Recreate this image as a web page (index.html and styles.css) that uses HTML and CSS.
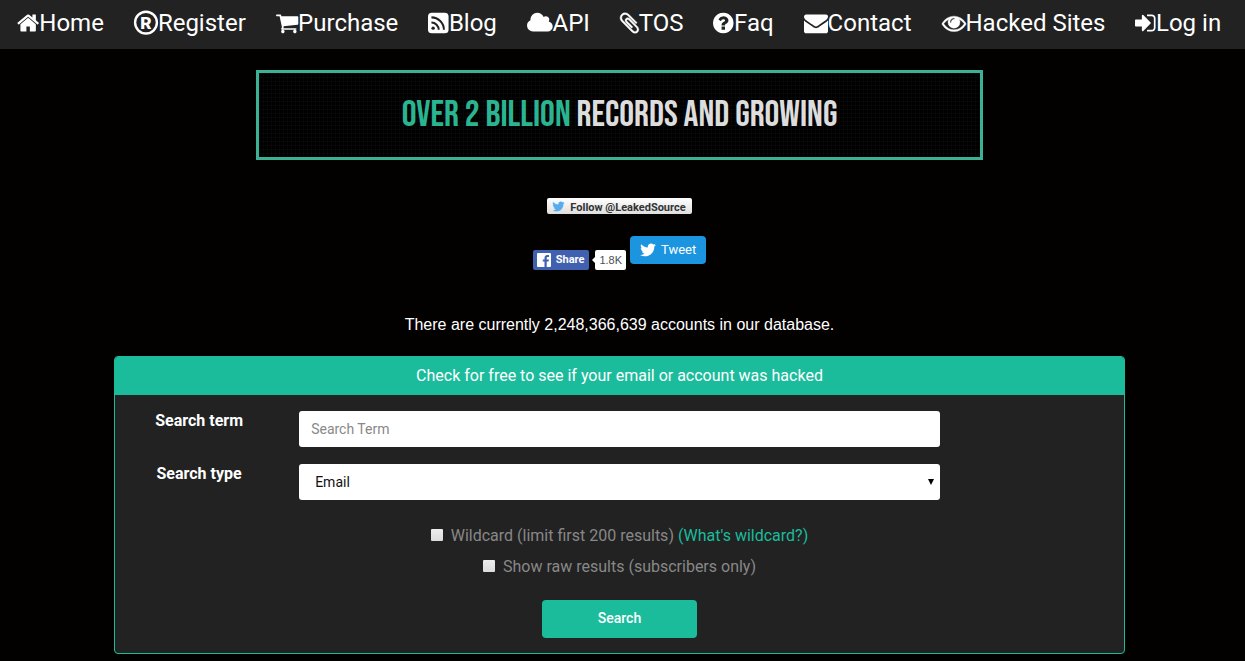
FILE: index.html
```html
<!DOCTYPE html>
<html lang="en">
<head>
<meta charset="utf-8">
<title>LeakedSource</title>
<link rel="stylesheet" href="styles.css">
</head>
<body>
<nav class="navbar">
  <a href="#"><svg class="icon" viewBox="64 0 1664 1792"><path d="M1472 992v480q0 26-19 45t-45 19h-384v-384h-256v384h-384q-26 0-45-19t-19-45v-480q0-1 .5-3t.5-3l575-474 575 474q1 2 1 6zm223-69l-62 74q-8 9-21 11h-3q-13 0-21-7l-692-577-692 577q-12 8-24 7-13-2-21-11l-62-74q-8-10-7-23.5t11-21.5l719-599q32-26 76-26t76 26l244 204v-195q0-14 9-23t23-9h192q14 0 23 9t9 23v408l219 182q10 8 11 21.5t-7 23.5z"/></svg>Home</a>
  <a href="#"><svg class="icon" viewBox="0 0 1792 1792"><circle class="ring" cx="896" cy="866" r="815"/><text class="mark" x="896" y="1340" text-anchor="middle">R</text></svg>Register</a>
  <a href="#"><svg class="icon" viewBox="64 0 1664 1792"><path d="M704 1536q0 52-38 90t-90 38-90-38-38-90 38-90 90-38 90 38 38 90zm896 0q0 52-38 90t-90 38-90-38-38-90 38-90 90-38 90 38 38 90zm128-1088v512q0 24-16.5 42.5t-40.5 21.5l-1044 122q13 60 13 70 0 16-24 64h920q26 0 45 19t19 45-19 45-45 19h-1024q-26 0-45-19t-19-45q0-11 8-31.5t16-36 21.5-40 15.5-29.5l-177-823h-204q-26 0-45-19t-19-45 19-45 45-19h256q16 0 28.5 6.5t19.5 15.5 13 24.5 8 26 5.5 29.5 4.5 26h1201q26 0 45 19t19 45z"/></svg>Purchase</a>
  <a href="#"><svg class="icon" viewBox="128 0 1536 1792"><rect x="128" y="128" width="1536" height="1536" rx="288"/><circle class="cut" cx="512" cy="1280" r="128"/><path class="cut-line" d="M384 864a544 544 0 0 1 544 544M384 476a932 932 0 0 1 932 932"/></svg>Blog</a>
  <a href="#"><svg class="icon" viewBox="64 0 1920 1792"><path d="M1984 1152q0 159-112.500 271.500t-271.500 112.500h-1088q-185 0-316.500-131.500t-131.500-316.500q0-132 71-241.500t187-163.500q-2-28-2-43 0-212 150-362t362-150q158 0 286.500 88t187.500 230q70-62 166-62 106 0 181 75t75 181q0 75-41 138 129 30 213 134.500t84 239.500z"/></svg>API</a>
  <a href="#"><svg class="icon bold" viewBox="192 0 1408 1792"><path d="M1596 1385q0 117-79 196t-196 79q-135 0-235-100l-777-776q-113-115-113-271 0-159 110-270t269-111q158 0 273 113l605 606q10 10 10 22 0 16-30.500 46.500t-46.500 30.500q-13 0-23-10l-606-607q-79-77-181-77-106 0-179 75t-73 181q0 105 76 181l776 777q63 63 145 63 64 0 106-42t42-106q0-82-63-145l-581-581q-26-24-60-24-29 0-48 19t-19 48q0 32 25 59l410 410q10 10 10 22 0 16-31 47t-47 31q-12 0-22-10l-410-410q-63-61-63-149 0-82 57-139t139-57q88 0 149 63l581 581q100 98 100 235z"/></svg>TOS</a>
  <a href="#"><svg class="icon" viewBox="128 0 1536 1792"><path d="M1024 1376v-192q0-14-9-23t-23-9h-192q-14 0-23 9t-9 23v192q0 14 9 23t23 9h192q14 0 23-9t9-23zm256-672q0-88-55.500-163t-138.500-116-170-41q-243 0-371 213-15 24 8 42l132 100q7 6 19 6 16 0 25-12 53-68 86-92 34-24 86-24 48 0 85.500 26t37.500 59q0 38-20 61t-68 45q-63 28-115.500 86.500t-52.500 125.500v36q0 14 9 23t23 9h192q14 0 23-9t9-23q0-19 21.500-49.500t54.500-49.500q32-18 49-28.500t46-35 44.500-48 28-60.500 12.500-81zm384 192q0 209-103 385.500t-279.500 279.500-385.500 103-385.500-103-279.500-279.500-103-385.500 103-385.500 279.500-279.500 385.500-103 385.500 103 279.500 279.500 103 385.500z"/></svg>Faq</a>
  <a href="#"><svg class="icon" viewBox="0 0 1792 1792"><path d="M1792 710v794q0 66-47 113t-113 47h-1472q-66 0-113-47t-47-113v-794q44 49 101 87 362 246 497 345 57 42 92.500 65.500t94.500 48 110 24.500h2q51 0 110-24.500t94.500-48 92.500-65.500q170-123 498-345 57-39 100-87zm0-294q0 79-49 151t-122 123q-376 261-468 325-10 7-42.500 31t-54 38.500-52 32.500-57.500 27-50 9h-2q-23 0-50-9t-57.500-27-52-32.500-54-38.500-42.500-31q-91-64-262-182.500t-205-142.500q-62-42-117-115.500t-55-136.500q0-78 41.500-130t118.500-52h1472q65 0 112.500 47t47.500 113z"/></svg>Contact</a>
  <a href="#"><svg class="icon bold" viewBox="0 0 1792 1792"><path d="M1664 960q-152-236-381-353 61 104 61 225 0 185-131.500 316.500t-316.500 131.500-316.500-131.500-131.500-316.500q0-121 61-225-229 117-381 353 133 205 333.500 326.500t434.500 121.500 434.500-121.500 333.500-326.500zm-720-384q0-20-14-34t-34-14q-125 0-214.500 89.500t-89.500 214.500q0 20 14 34t34 14 34-14 14-34q0-86 61-147t147-61q20 0 34-14t14-34zm848 384q0 34-20 69-140 230-376.500 368.500t-499.500 138.500-499.500-139-376.500-368q-20-35-20-69t20-69q140-229 376.500-368t499.500-139 499.500 139 376.500 368q20 35 20 69z"/></svg>Hacked Sites</a>
  <a href="#"><svg class="icon" viewBox="128 0 1536 1792"><path d="M1312 896q0 26-19 45l-544 544q-19 19-45 19t-45-19-19-45v-288h-448q-26 0-45-19t-19-45v-384q0-26 19-45t45-19h448v-288q0-26 19-45t45-19 45 19l544 544q19 19 19 45zm352-352v704q0 119-84.500 203.500t-203.500 84.500h-320q-13 0-22.500-9.500t-9.500-22.500q0-4-1-20t-.5-26.500 3-23.500 10-19.500 20.500-6.500h320q66 0 113-47t47-113v-704q0-66-47-113t-113-47h-312l-11.500-1-11.500-3-8-5.500-7-9-2-13.500q0-4-1-20t-.5-26.500 3-23.500 10-19.500 20.500-6.500h320q119 0 203.500 84.500t84.500 203.500z"/></svg>Log in</a>
</nav>

<main class="page">
  <div class="banner"><span class="accent">OVER 2 BILLION</span> RECORDS AND GROWING</div>

  <a class="follow" href="#"><svg class="bird" viewBox="100 200 1600 1400"><path d="M1684 408q-67 98-162 167 1 14 1 42 0 130-38 259.500t-115.500 248.500-184.500 210.500-258 146-323 54.500q-271 0-496-145 35 4 78 4 225 0 401-138-105-2-188-64.500t-114-159.500q33 5 61 5 43 0 85-11-112-23-185.500-111.500t-73.500-205.500v-4q68 38 146 41-66-44-105-115t-39-154q0-88 44-163 121 149 294.500 238.500t371.500 99.500q-8-38-8-74 0-134 94.500-228.500t228.500-94.500q140 0 236 102 109-21 205-78-37 115-142 178 93-10 186-50z"/></svg><span class="follow-text">Follow @LeakedSource</span></a>

  <div class="share-row">
    <a class="share" href="#"><svg class="fb" viewBox="0 0 14 14"><rect width="14" height="14" rx="1" fill="#fff"/><path fill="#4060b0" d="M7.500 14V8.600H5.800V6.500h1.700V4.900c0-1.900 1.100-2.900 2.800-2.900.8 0 1.500.1 1.700.1v2h-1.200c-.9 0-1.100.5-1.100 1.100v1.300h2.200l-.3 2.100H9.700V14z"/></svg>Share</a>
    <span class="count">1.8K</span>
    <a class="tweet" href="#"><svg class="bird" viewBox="100 200 1600 1400"><path d="M1684 408q-67 98-162 167 1 14 1 42 0 130-38 259.500t-115.500 248.500-184.500 210.500-258 146-323 54.500q-271 0-496-145 35 4 78 4 225 0 401-138-105-2-188-64.500t-114-159.500q33 5 61 5 43 0 85-11-112-23-185.500-111.500t-73.500-205.500v-4q68 38 146 41-66-44-105-115t-39-154q0-88 44-163 121 149 294.500 238.500t371.500 99.500q-8-38-8-74 0-134 94.500-228.500t228.500-94.500q140 0 236 102 109-21 205-78-37 115-142 178 93-10 186-50z"/></svg>Tweet</a>
  </div>

  <p class="total">There are currently 2,248,366,639 accounts in our database.</p>

  <section class="panel">
    <h1 class="panel-title">Check for free to see if your email or account was hacked</h1>
    <form class="panel-body">
      <div class="field">
        <label for="term">Search term</label>
        <input class="control" id="term" type="text" placeholder="Search Term">
      </div>
      <div class="field">
        <label for="type">Search type</label>
        <div class="select-wrap">
          <select class="control" id="type"><option>Email</option></select>
          <svg class="caret" viewBox="0 0 6 6"><path d="M0 0h6L3 6z"/></svg>
        </div>
      </div>
      <div class="checks">
        <div class="check"><input id="wild" type="checkbox"><label for="wild">Wildcard (limit first 200 results)</label><a href="#">(What's wildcard?)</a></div>
        <div class="check"><input id="raw" type="checkbox"><label for="raw">Show raw results (subscribers only)</label></div>
      </div>
      <button class="search" type="submit">Search</button>
    </form>
  </section>
</main>
</body>
</html>
```
FILE: styles.css
```css
* {
  box-sizing: border-box;
}

body {
  margin: 0;
  background: #030000;
  color: #fff;
  font-family: Roboto, "Liberation Sans", sans-serif;
  font-size: 16px;
  line-height: 20px;
}

a {
  color: #1abc9c;
  text-decoration: none;
}

.navbar {
  display: flex;
  padding: 0 2px;
  height: 49px;
  background: #222;
}

.navbar a {
  display: flex;
  align-items: center;
  padding: 0 15px 4px;
  color: #fff;
  font-size: 24px;
  white-space: nowrap;
}

.icon {
  height: 24px;
  fill: #fff;
  overflow: visible;
}

.bold {
  stroke: #fff;
  stroke-width: 30;
}

.ring {
  fill: none;
  stroke: #fff;
  stroke-width: 180;
}

.mark {
  font-size: 1300px;
  font-weight: 900;
}

.cut {
  fill: #222;
}

.cut-line {
  fill: none;
  stroke: #222;
  stroke-width: 150;
}

.page {
  display: flex;
  flex-direction: column;
  align-items: center;
  padding: 21px 120px 7px 114px;
}

.banner {
  width: 72%;
  padding: 22px 0;
  border: 3px solid #3bb295;
  background:
    repeating-linear-gradient(90deg, #0c0c0c80 0 1px, transparent 1px 4px),
    repeating-linear-gradient(#0c0c0c80 0 1px, transparent 1px 4px),
    #000;
  color: #ddd;
  font-family: "Bebas Neue", "Roboto Condensed", "Liberation Sans Narrow", "Liberation Sans", sans-serif;
  font-size: 37px;
  line-height: 40px;
  text-align: center;
  white-space: nowrap;
}

.accent {
  color: #2ab592;
}

.bird {
  fill: #fff;
  width: 16px;
  height: 14px;
}

.follow {
  display: flex;
  align-items: center;
  gap: 5px;
  height: 16px;
  margin-top: 38px;
  padding: 0 6px 0 5px;
  border-radius: 2px;
  background: linear-gradient(#fff, #dedede);
  color: #333;
  font-size: 11px;
  font-weight: 700;
  overflow: hidden;
}

.follow-text {
  padding-top: 4px;
}

.follow .bird {
  width: 13px;
  height: 11px;
  fill: #55acee;
}

.share-row {
  display: flex;
  align-items: flex-end;
  height: 34px;
  margin-top: 22px;
}

.share {
  display: flex;
  align-items: center;
  gap: 5px;
  height: 20px;
  padding: 0 5px 0 4px;
  border-radius: 2px;
  background: #4060b0;
  color: #fff;
  font-size: 11px;
  font-weight: 700;
}

.fb {
  width: 14px;
  height: 14px;
}

.count {
  position: relative;
  height: 20px;
  margin: 0 4px 0 6px;
  padding: 0 4px;
  border-radius: 2px;
  background: #fff;
  color: #4b4f56;
  font-family: "Liberation Sans", sans-serif;
  font-size: 11px;
}

.count::before {
  content: "";
  position: absolute;
  top: 7px;
  left: -3px;
  border: 3px solid transparent;
  border-left-width: 0;
  border-right-color: #fff;
}

.tweet {
  display: flex;
  align-items: center;
  align-self: flex-start;
  gap: 5px;
  height: 28px;
  padding: 0 10px;
  border-radius: 4px;
  background: #1b95e0;
  color: #fff;
  font-size: 13px;
}

.total {
  margin: 45px 0 21px;
  font-family: "Liberation Sans", sans-serif;
}

.panel {
  width: 100%;
  border: 1px solid #1abc9c;
  border-radius: 4px;
  background: #222;
  overflow: hidden;
}

.panel-title {
  margin: 0;
  padding: 9px;
  background: #1abc9c;
  font-size: 16px;
  font-weight: 400;
  line-height: 20px;
  text-align: center;
}

.panel-body {
  display: flex;
  flex-direction: column;
  align-items: center;
  padding: 16px 0 15px;
}

.field {
  display: grid;
  grid-template-columns: 1fr 4fr 1fr;
  width: 100%;
  margin-bottom: 17px;
}

.field label {
  font-weight: 700;
  text-align: center;
}

.control {
  appearance: none;
  display: block;
  height: 36px;
  padding: 0 12px;
  border: 0;
  border-radius: 3px;
  background: #fff;
  color: #111;
  font: 14px Roboto, sans-serif;
}

input.control {
  margin: 0 16px;
}

select.control {
  width: 100%;
  padding: 0 16px;
}

.control::placeholder {
  color: #888;
}

.select-wrap {
  position: relative;
  margin: 0 16px;
}

.caret {
  position: absolute;
  top: 15px;
  right: 6px;
  width: 6px;
  height: 6px;
}

.checks {
  display: grid;
  gap: 11px;
  justify-items: center;
  margin: 9px 0 23px;
  color: #888;
}

.check {
  display: flex;
  align-items: center;
  white-space: pre;
}

.check input {
  appearance: none;
  width: 12px;
  height: 12px;
  margin: 0 8px 2px 0;
  border-radius: 1px;
  background: linear-gradient(#eee, #dcdcdc);
}

.check a {
  margin-left: 4px;
}

.search {
  width: 155px;
  height: 38px;
  padding: 0 0 2px;
  border: 0;
  border-radius: 4px;
  background: #1abc9c;
  color: #fff;
  font: 500 14px Roboto, sans-serif;
}
```
